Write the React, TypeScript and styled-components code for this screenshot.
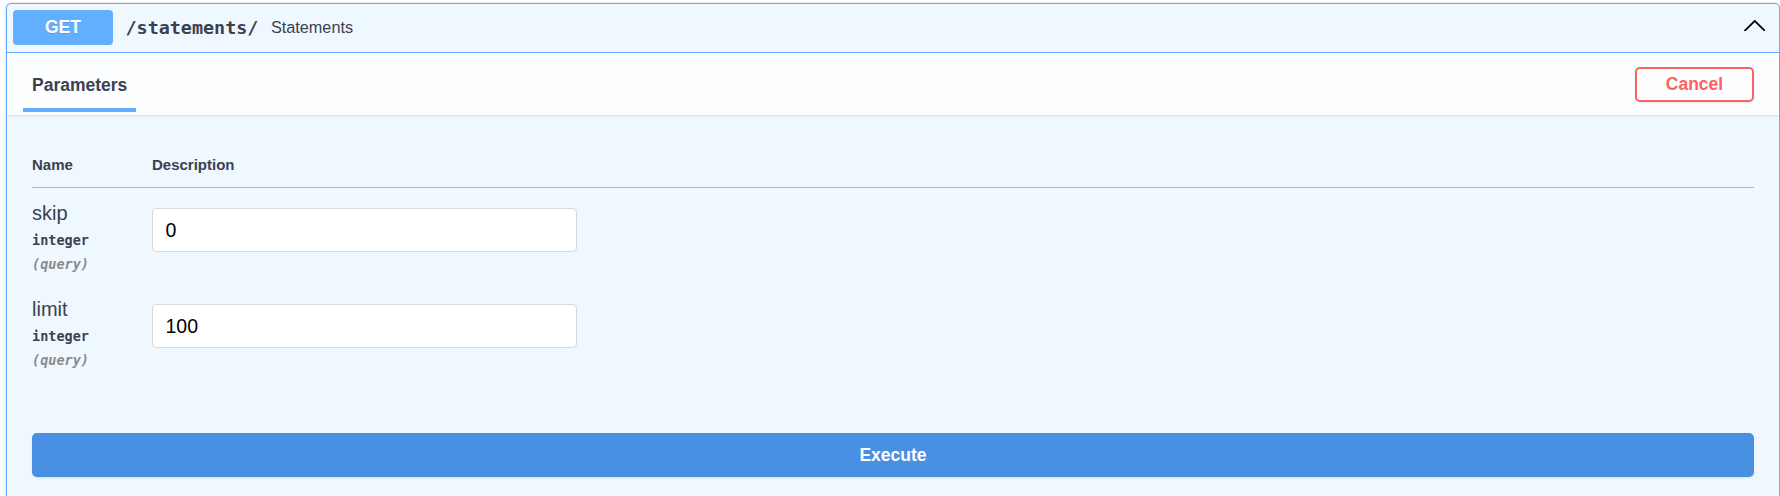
import React from 'react';
import styled, { createGlobalStyle } from 'styled-components';

const GlobalStyle = createGlobalStyle`
    html, body {
        margin: 0;
        padding: 0;
        background: #ffffff;
        font-family: "Liberation Sans", Arial, sans-serif;
        color: #3b4151;
    }
`

const Page = styled.div`
    padding: 3px 0 0 6px;
    overflow: hidden;
    height: 493px;
`

const Opblock = styled.div`
    border: 1px solid #61affe;
    border-radius: 5px;
    background: #eff7ff;
    box-shadow: 0 0 3px rgba(0, 0, 0, 0.19);
`

const Summary = styled.div`
    display: flex;
    align-items: center;
    padding: 6px 6px 7px 6px;
    border-bottom: 1px solid #61affe;
`

const Method = styled.span`
    display: flex;
    align-items: center;
    justify-content: center;
    width: 100px;
    height: 35px;
    border-radius: 4px;
    background: #61affe;
    color: #ffffff;
    font-size: 17.5px;
    font-weight: bold;
    text-shadow: 0 1px 0 rgba(0, 0, 0, 0.1);
`

const Path = styled.span`
    padding: 0 12.5px;
    font-family: "DejaVu Sans Mono", "Liberation Mono", monospace;
    font-size: 18.4px;
    font-weight: bold;
    color: #3b4151;
`

const SummaryDesc = styled.span`
    flex: 1;
    font-size: 16.25px;
    color: #3b4151;
`

const Arrow = styled.svg`
    width: 21.5px;
    height: 11.5px;
    margin: 0 8px 4px 0;
    fill: #000000;
`

const SectionHeader = styled.div`
    display: flex;
    align-items: center;
    min-height: 62px;
    padding: 1px 25px 0 25px;
    box-sizing: border-box;
    background: rgba(255, 255, 255, 0.8);
    box-shadow: 0 1px 2px rgba(0, 0, 0, 0.1);
`

const TabTitle = styled.span`
    position: relative;
    font-size: 17.5px;
    line-height: 20px;
    font-weight: bold;
    color: #3b4151;

    &::after {
        content: '';
        position: absolute;
        top: calc(100% + 13px);
        left: -9px;
        right: -9px;
        height: 4px;
        background: #61affe;
    }
`

const CancelButton = styled.button`
    margin-left: auto;
    width: 119px;
    height: 35px;
    border: 2px solid #ff6060;
    border-radius: 5px;
    background: transparent;
    box-shadow: 0 1px 2px rgba(0, 0, 0, 0.1);
    color: #ff6060;
    font-family: "Liberation Sans", Arial, sans-serif;
    font-size: 17.5px;
    font-weight: bold;
    cursor: pointer;
`

const TableWrap = styled.div`
    padding: 25px 25px 25px 25px;
`

const HeadRow = styled.div`
    display: grid;
    grid-template-columns: 120px 1fr;
    padding: 16px 0 14px 0;
    border-bottom: 1px solid #adb4c2;
    font-size: 15px;
    line-height: 17px;
    font-weight: bold;
    color: #3b4151;
`

const ParamRow = styled.div`
    display: grid;
    grid-template-columns: 120px 1fr;
    padding: 14px 0 11px 0;
`

const ParamName = styled.div`
    font-size: 20px;
    line-height: 23px;
    color: #3b4151;
`

const ParamType = styled.div`
    padding: 6px 0;
    font-family: "DejaVu Sans Mono", "Liberation Mono", monospace;
    font-size: 13.5px;
    line-height: 18px;
    font-weight: bold;
    color: #3b4151;
`

const ParamIn = styled.div`
    font-family: "DejaVu Sans Mono", "Liberation Mono", monospace;
    font-size: 13.5px;
    line-height: 18px;
    font-style: italic;
    font-weight: bold;
    color: #8a8a8a;
`

const Input = styled.input`
    display: block;
    box-sizing: border-box;
    width: 425px;
    height: 44px;
    margin-top: 6px;
    padding: 0 12.5px;
    border: 1px solid #d9d9d9;
    border-radius: 4px;
    background: #ffffff;
    font-family: "Liberation Sans", Arial, sans-serif;
    font-size: 19.5px;
    color: #000000;
    outline: none;
`

const ExecuteWrap = styled.div`
    padding: 28px 25px 25px 25px;
`

const ExecuteButton = styled.button`
    display: block;
    width: 100%;
    height: 44px;
    border: 2px solid #4990e2;
    border-radius: 5px;
    background: #4990e2;
    box-shadow: 0 1px 2px rgba(0, 0, 0, 0.1);
    color: #ffffff;
    font-family: "Liberation Sans", Arial, sans-serif;
    font-size: 17.5px;
    font-weight: bold;
    cursor: pointer;
`

const params = [
    { name: 'skip', type: 'integer', where: '(query)', value: '0' },
    { name: 'limit', type: 'integer', where: '(query)', value: '100' },
]

function App() {
    return (
        <Page>
            <GlobalStyle />
            <Opblock>
                <Summary>
                    <Method>GET</Method>
                    <Path>/statements/</Path>
                    <SummaryDesc>Statements</SummaryDesc>
                    <Arrow viewBox="1.4 5.9 17.2 9.2">
                        <path d="M 17.418 14.908 C 17.69 15.176 18.127 15.176 18.397 14.908 C 18.667 14.64 18.668 14.207 18.397 13.939 L 10.489 6.109 C 10.219 5.841 9.782 5.841 9.51 6.109 L 1.602 13.939 C 1.332 14.207 1.332 14.64 1.602 14.908 C 1.873 15.176 2.311 15.176 2.581 14.908 L 10 7.767 L 17.418 14.908 Z" />
                    </Arrow>
                </Summary>
                <SectionHeader>
                    <TabTitle>Parameters</TabTitle>
                    <CancelButton>Cancel</CancelButton>
                </SectionHeader>
                <TableWrap>
                    <HeadRow>
                        <div>Name</div>
                        <div>Description</div>
                    </HeadRow>
                    {params.map(p => (
                        <ParamRow key={p.name}>
                            <div>
                                <ParamName>{p.name}</ParamName>
                                <ParamType>{p.type}</ParamType>
                                <ParamIn>{p.where}</ParamIn>
                            </div>
                            <div>
                                <Input defaultValue={p.value} />
                            </div>
                        </ParamRow>
                    ))}
                </TableWrap>
                <ExecuteWrap>
                    <ExecuteButton>Execute</ExecuteButton>
                </ExecuteWrap>
            </Opblock>
        </Page>
    );
}
export default App;
